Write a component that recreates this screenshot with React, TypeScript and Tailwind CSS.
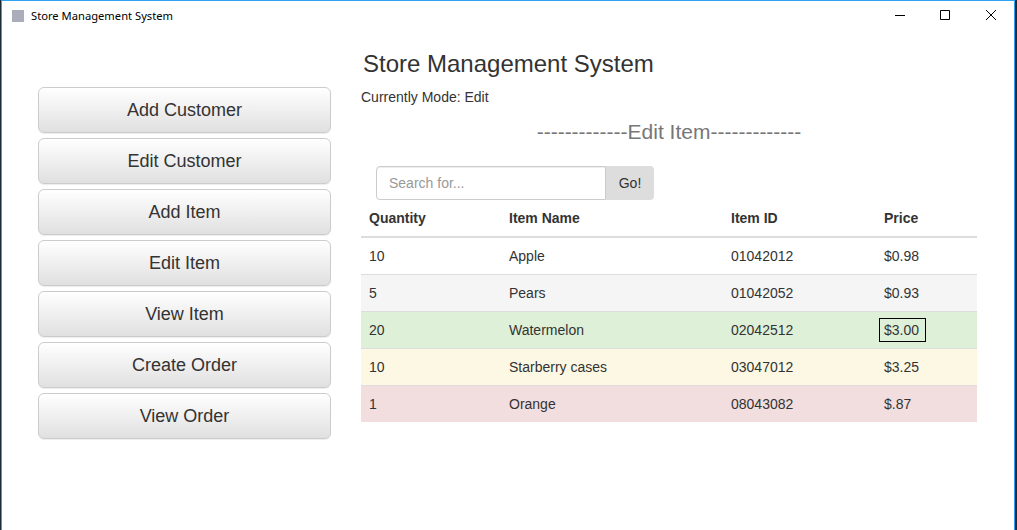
const items = [
  { qty: "10", name: "Apple", id: "01042012", price: "$0.98", bg: "bg-white" },
  { qty: "5", name: "Pears", id: "01042052", price: "$0.93", bg: "bg-[#f5f5f5]" },
  { qty: "20", name: "Watermelon", id: "02042512", price: "$3.00", bg: "bg-[#dff0d8]", focused: true },
  { qty: "10", name: "Starberry cases", id: "03047012", price: "$3.25", bg: "bg-[#fcf8e3]" },
  { qty: "1", name: "Orange", id: "08043082", price: "$.87", bg: "bg-[#f2dede]" },
];

const menu = ["Add Customer", "Edit Customer", "Add Item", "Edit Item", "View Item", "Create Order", "View Order"];

const App = () => {
  return (
    <div className="h-[530px] w-[1017px] overflow-hidden border-l border-r-2 border-l-[#1c2b38] border-r-[#1c2b38] font-['Liberation_Sans',sans-serif] text-[14px] leading-5 text-[#333]">
      <div className="h-full border-x border-t border-[#2ea3f2] bg-white">
        {/* Title bar */}
        <div className="flex h-[29px] items-center pl-[10px]">
          <div className="h-3 w-3 bg-[#abaeba]" />
          <span className="ml-[7px] font-['Noto_Sans',sans-serif] text-[11.2px] text-black">Store Management System</span>
          <div className="ml-auto flex items-center">
            <svg width="46" height="29" viewBox="0 0 46 29" className="text-black">
              <path d="M19 14.5h10" stroke="currentColor" fill="none" />
            </svg>
            <svg width="46" height="29" viewBox="0 0 46 29" className="text-black">
              <path d="M18.5 9.5h9v9h-9z" stroke="currentColor" fill="none" />
            </svg>
            <svg width="46" height="29" viewBox="0 0 46 29" className="text-black">
              <path d="M18 9l10 10M28 9l-10 10" stroke="currentColor" fill="none" />
            </svg>
          </div>
        </div>

        <div className="flex">
          {/* Menu */}
          <div className="ml-[36px] mt-[57px] flex w-[293px] flex-col gap-[5px]">
            {menu.map((label) => (
              <button
                key={label}
                className="h-[46px] rounded-[6px] border border-[#ccc] bg-gradient-to-b from-white to-[#e0e0e0] text-[18px] text-[#333] shadow-[0_1px_1px_rgba(0,0,0,0.075)]"
              >
                {label}
              </button>
            ))}
          </div>

          {/* Main */}
          <div className="ml-[30px] w-[616px]">
            <h1 className="ml-[2px] mt-[4px] text-[24px] leading-[60px] font-normal">Store Management System</h1>
            <p className="mt-[-7px]">Currently Mode: Edit</p>
            <h3 className="mt-[14px] text-center text-[21px] leading-[22px] text-[#777]">-------------Edit Item-------------</h3>

            <div className="ml-[15px] mt-[23px] flex h-[34px] w-[278px]">
              <input
                placeholder="Search for..."
                className="h-full w-[230px] rounded-l-[4px] border border-[#ccc] px-3 text-[14px] text-[#555] shadow-[inset_0_1px_1px_rgba(0,0,0,0.075)] placeholder:text-[#999]"
              />
              <button className="h-full flex-1 rounded-r-[4px] bg-[#ddd] text-[14px] text-[#333]">Go!</button>
            </div>

            <table className="w-[616px] table-fixed border-collapse">
              <thead>
                <tr className="border-b-2 border-[#ddd] text-left">
                  <th className="w-[140px] p-2 font-bold">Quantity</th>
                  <th className="w-[222px] p-2 font-bold">Item Name</th>
                  <th className="w-[153px] p-2 font-bold">Item ID</th>
                  <th className="p-2 font-bold">Price</th>
                </tr>
              </thead>
              <tbody>
                {items.map((item, i) => (
                  <tr key={item.id} className={`${item.bg} ${i > 0 ? "border-t border-[#ddd]" : ""}`}>
                    <td className="p-2">{item.qty}</td>
                    <td className="p-2">{item.name}</td>
                    <td className="p-2">{item.id}</td>
                    <td className="p-2">
                      {item.focused ? (
                        <span className="-ml-[5px] -mr-[6px] -my-[3px] inline-block border border-black py-[1px] pl-[4px] pr-[6px]">{item.price}</span>
                      ) : (
                        item.price
                      )}
                    </td>
                  </tr>
                ))}
              </tbody>
            </table>
          </div>
        </div>
      </div>
    </div>
  );
};

export default App;
